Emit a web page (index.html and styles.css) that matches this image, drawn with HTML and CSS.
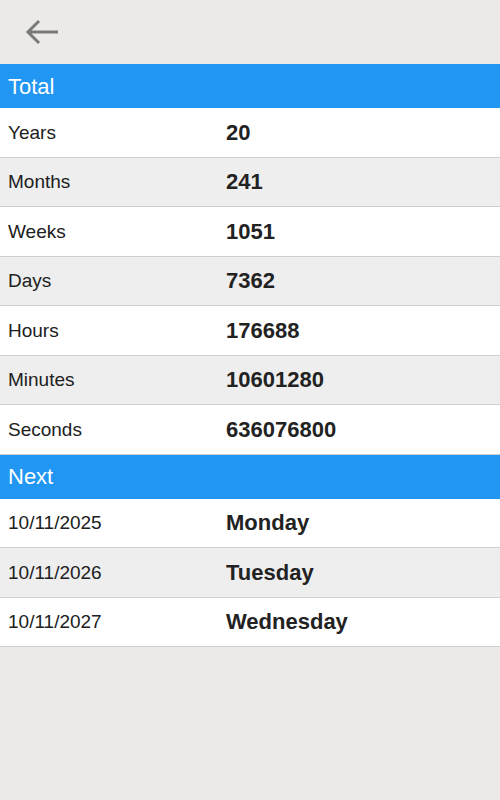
FILE: index.html
```html
<!DOCTYPE html>
<html>
<head>
<meta charset="utf-8">
<link rel="stylesheet" href="styles.css">
</head>
<body>
<div class="toolbar">
  <button class="back" aria-label="Back">
    <svg width="34" height="26" viewBox="0 0 34 26">
      <path d="M3 13H33M14 2L3 13L14 24" fill="none" stroke="#7a7a7a" stroke-width="3"/>
    </svg>
  </button>
</div>
<div class="section">Total</div>
<div class="row"><span class="label">Years</span><span class="value">20</span></div>
<div class="row alt"><span class="label">Months</span><span class="value">241</span></div>
<div class="row"><span class="label">Weeks</span><span class="value">1051</span></div>
<div class="row alt"><span class="label">Days</span><span class="value">7362</span></div>
<div class="row"><span class="label">Hours</span><span class="value">176688</span></div>
<div class="row alt"><span class="label">Minutes</span><span class="value">10601280</span></div>
<div class="row"><span class="label">Seconds</span><span class="value">636076800</span></div>
<div class="section">Next</div>
<div class="row"><span class="label">10/11/2025</span><span class="value">Monday</span></div>
<div class="row alt"><span class="label">10/11/2026</span><span class="value">Tuesday</span></div>
<div class="row"><span class="label">10/11/2027</span><span class="value">Wednesday</span></div>
</body>
</html>
```
FILE: styles.css
```css
html, body {
  margin: 0;
  padding: 0;
}
body {
  background: #ebeae8;
  font-family: "Liberation Sans", Arial, sans-serif;
  color: #1c1c1c;
  width: 500px;
  min-height: 800px;
}
.toolbar {
  height: 64px;
  display: flex;
  align-items: center;
  padding-left: 25px;
}
.back {
  border: 0;
  background: none;
  padding: 0;
  display: flex;
  width: 34px;
  height: 26px;
}
.section {
  height: 44px;
  background: #2196f3;
  color: #fff;
  font-size: 22px;
  display: flex;
  align-items: center;
  padding-left: 8px;
  padding-top: 1px;
  box-sizing: border-box;
}
.row {
  box-sizing: border-box;
  height: 49.5px;
  border-bottom: 1px solid #cfcfcf;
  background: #fff;
  display: grid;
  grid-template-columns: 226px 1fr;
  align-items: center;
  padding-top: 1px;
}
.row.alt {
  background: #eeeeee;
}
.label {
  padding-left: 8px;
  font-size: 19px;
  color: #202020;
}
.value {
  font-size: 22px;
  font-weight: bold;
  color: #222;
}
```
